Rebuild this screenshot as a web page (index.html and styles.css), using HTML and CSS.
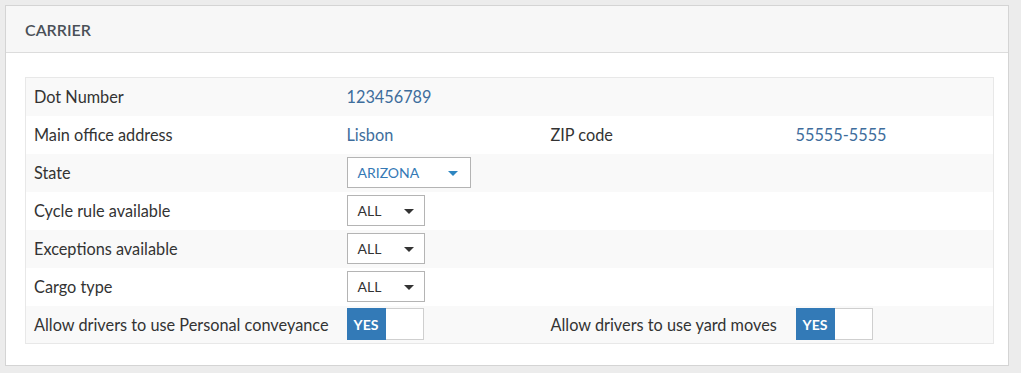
FILE: index.html
```html
<!DOCTYPE html>
<html>
<head>
<meta charset="utf-8">
<link rel="stylesheet" href="styles.css">
</head>
<body>
<div class="panel">
  <div class="panel-head">CARRIER</div>
  <div class="panel-body">
    <table class="grid">
      <colgroup>
        <col class="c1"><col class="c2"><col class="c3"><col class="c4">
      </colgroup>
      <tr>
        <td>Dot Number</td><td class="val">123456789</td><td></td><td></td>
      </tr>
      <tr>
        <td>Main office address</td><td class="val">Lisbon</td><td>ZIP code</td><td class="val">55555-5555</td>
      </tr>
      <tr>
        <td>State</td>
        <td><div class="select wide blue"><span>ARIZONA</span><i class="caret"></i></div></td><td></td><td></td>
      </tr>
      <tr>
        <td>Cycle rule available</td>
        <td><div class="select"><span>ALL</span><i class="caret"></i></div></td><td></td><td></td>
      </tr>
      <tr>
        <td>Exceptions available</td>
        <td><div class="select"><span>ALL</span><i class="caret"></i></div></td><td></td><td></td>
      </tr>
      <tr>
        <td>Cargo type</td>
        <td><div class="select"><span>ALL</span><i class="caret"></i></div></td><td></td><td></td>
      </tr>
      <tr>
        <td>Allow drivers to use Personal conveyance</td>
        <td><div class="toggle"><span class="on">YES</span><span class="off"></span></div></td>
        <td>Allow drivers to use yard moves</td>
        <td><div class="toggle"><span class="on">YES</span><span class="off"></span></div></td>
      </tr>
    </table>
  </div>
</div>
</body>
</html>
```

FILE: styles.css
```css
html, body {
  margin: 0;
  padding: 0;
  background: #ececec;
  font-family: Lato, "Liberation Sans", sans-serif;
  color: #333;
}
.panel {
  margin: 5px 0 0 5px;
  width: 1002px;
  height: 359px;
  background: #fff;
  border: 1px solid #d4d4d4;
  box-sizing: content-box;
}
.panel-head {
  height: 47px;
  box-sizing: border-box;
  background: #f7f7f7;
  border-bottom: 1px solid #dcdcdc;
  padding: 0 0 0 19px;
  display: flex;
  align-items: center;
  font-size: 16px;
  color: #4a5057;
  font-weight: 600;
}
.panel-body {
  padding: 24px 16px 20px 19px;
}
.grid {
  width: 968px;
  border-collapse: collapse;
  border: 1px solid #e8e8e8;
  table-layout: fixed;
  font-size: 16.3px;
}
.c1 { width: 313px; }
.c2 { width: 204px; }
.c3 { width: 245px; }
.c4 { width: 206px; }
.grid tr { height: 38px; }
.grid tr:nth-child(odd) { background: #f9f9f9; }
.grid td {
  padding: 0 0 0 8px;
  vertical-align: middle;
  white-space: nowrap;
}
.val { color: #3e6d9c; }
.select {
  display: flex;
  align-items: center;
  justify-content: space-between;
  width: 78px;
  height: 31px;
  box-sizing: border-box;
  border: 1px solid #b4b4b4;
  background: #fff;
  padding: 0 10px 0 10px;
  font-size: 14px;
  color: #333;
}
.select.wide { width: 124px; padding-right: 12px; }
.select.blue { color: #3579b5; }
.caret {
  width: 0;
  height: 0;
  border-left: 5px solid transparent;
  border-right: 5px solid transparent;
  border-top: 5px solid #333;
  margin-top: 2px;
}
.select.blue .caret { border-top-color: #2e86c1; }
.toggle {
  display: flex;
  width: 77px;
  height: 32px;
  box-sizing: border-box;
  border: 1px solid #cfcfcf;
  background: #fff;
}
.toggle .on {
  width: 39px;
  background: #337ab7;
  color: #fff;
  font-size: 14px;
  font-weight: 700;
  display: flex;
  align-items: center;
  justify-content: center;
  margin: -1px 0 -1px -1px;
}
.toggle .off { flex: 1; }
```
